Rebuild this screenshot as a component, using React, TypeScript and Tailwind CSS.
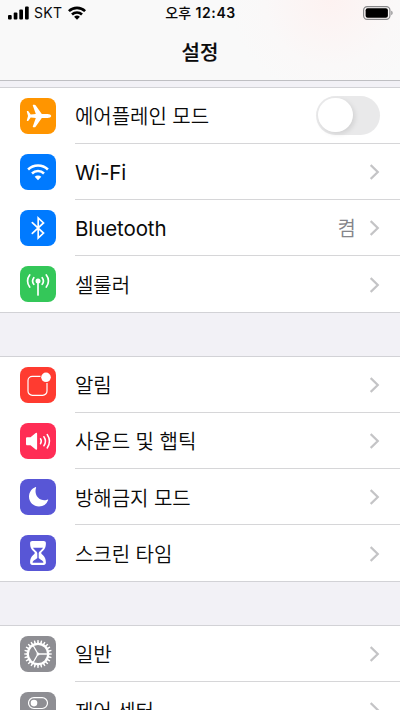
import type { ReactNode } from "react";

const krFont = "font-['Inter','Noto_Sans_CJK_KR',sans-serif]";

function Tile({ color, children }: { color: string; children: ReactNode }) {
  return (
    <div className={`size-9 shrink-0 overflow-hidden rounded-[8px] ${color}`}>
      <svg viewBox="0 0 36 36" className="block size-9" fill="none" stroke="white" strokeLinecap="round" strokeLinejoin="round">
        {children}
      </svg>
    </div>
  );
}

const Airplane = () => (
  <Tile color="bg-[#ff9500]">
    <path
      fill="white"
      stroke="none"
      d="M31.2 18c0-1.2-1.8-2-3.8-2h-5.6L15.600 7.300c-.3-.4-.6-.6-1.100-.6h-1.300c-.4 0-.5.3-.4.700L15.800 16l-5.100.4-2.300-3.100c-.2-.3-.4-.4-.7-.4h-.5c-.3 0-.4.200-.4.500L8 18l-1.200 4.600c0 .3.100.5.4.5h.5c.3 0 .5-.1.700-.4l2.300-3.100 5.100.4-3 8.600c-.1.4 0 .7.400.7h1.300c.5 0 .8-.2 1.100-.6L21.800 20h5.600c2 0 3.800-.8 3.800-2z"
    />
  </Tile>
);

const WifiTile = () => (
  <Tile color="bg-[#007aff]">
    <path d="M8.100 15.500a14 14 0 0 1 19.800 0M12 19.500a8.500 8.500 0 0 1 12 0" strokeWidth="2.500" strokeLinecap="butt" />
    <path fill="white" stroke="none" d="M18 26.300l-3.300-3.500a4.700 4.700 0 0 1 6.600 0z" />
  </Tile>
);

const BluetoothTile = () => (
  <Tile color="bg-[#007aff]">
    <path d="M12.300 12.700L23.500 23.100 18.200 28V8l5.300 4.900L12.300 23.300" strokeWidth="1.700" strokeLinejoin="miter" />
  </Tile>
);

const Cellular = () => (
  <Tile color="bg-[#34c759]">
    <circle cx="18" cy="15" r="2.500" fill="white" stroke="none" />
    <path d="M18 15v14" strokeWidth="1.700" />
    <path d="M13.800 11.700a5.500 5.500 0 0 0 0 6.600M22.200 11.700a5.500 5.500 0 0 1 0 6.600M9.700 9a9.500 9.500 0 0 0 0 12M26.300 9a9.500 9.500 0 0 1 0 12" strokeWidth="1.700" />
  </Tile>
);

const Notifications = () => (
  <Tile color="bg-[#ff3b30]">
    <path d="M20.500 9.300H12.300a4.300 4.300 0 0 0-4.300 4.300v10.400a4.300 4.300 0 0 0 4.300 4.300h10.400a4.300 4.300 0 0 0 4.300-4.300V16" strokeWidth="1.200" strokeLinecap="butt" />
    <circle cx="26" cy="10.300" r="4.800" fill="white" stroke="none" />
  </Tile>
);

const Sound = () => (
  <Tile color="bg-[#ff2d55]">
    <path fill="white" stroke="none" d="M7.300 14.300h3.200l5.200-4.200c.7-.6 1.400-.3 1.400.6v15.100c0 .9-.7 1.200-1.400.6l-5.200-4.200H7.300c-.8 0-1.300-.5-1.300-1.300v-5.300c0-.8.500-1.300 1.300-1.300z" />
    <path d="M20.500 15.800a4.300 4.300 0 0 1 0 4.900M23.900 13.700a8 8 0 0 1 0 9.100M27.200 11.500a12 12 0 0 1 0 13.500" strokeWidth="1.500" />
  </Tile>
);

const Moon = () => (
  <Tile color="bg-[#5856d6]">
    <path fill="white" stroke="none" d="M15.700 8.100c.3-.2.600.1.400.5-2 5.800 1.200 12.800 8.300 12.600 1.500 0 2.500-.4 3.300-.7.400-.2.700.1.500.5a10 10 0 0 1-9.200 6.500c-5.500 0-10-4.200-10-9.700 0-4.200 2.600-8.200 6.700-9.700z" />
  </Tile>
);

const Hourglass = () => (
  <Tile color="bg-[#5856d6]">
    <path fill="white" stroke="none" d="M12.300 6h11.400c1.400 0 2.200.9 2.200 2.300 0 5.100-2 6.700-4.200 8.700-.6.600-.6 1.500 0 2.100 2.200 2 4.200 3.600 4.200 8.500 0 1.500-.8 2.400-2.200 2.400H12.300c-1.400 0-2.200-.9-2.200-2.400 0-4.900 2-6.500 4.200-8.500.6-.6.600-1.500 0-2.100-2.200-2-4.200-3.600-4.200-8.700 0-1.400.8-2.300 2.200-2.300z" />
    <path fill="#5856d6" stroke="none" d="M13 12.700h10c-.7 1.500-2 2.300-3.200 3.500-1 1-1.100 1.500-1.100 2.500v4.100c0 1.200 3.500 2 4.700 4.300.2.400 0 .7-.4.700H13c-.4 0-.6-.3-.4-.7 1.200-2.300 4.700-3.100 4.700-4.300v-4.100c0-1-.1-1.500-1.100-2.500-1.200-1.200-2.500-2-3.200-3.500z" />
  </Tile>
);

const teeth = Array.from({ length: 24 }, (_, i) => i * 15);

const Gear = () => (
  <Tile color="bg-[#8e8e93]">
    <circle cx="18" cy="18" r="10.200" strokeWidth="2.200" />
    {teeth.map((a) => (
      <path key={a} d="M17 7.800l.4-3.700h1.200l.4 3.700z" fill="white" stroke="none" transform={`rotate(${a} 18 18)`} />
    ))}
    <path d="M18 18h10M18 18l-5-8.700M18 18l-5 8.700" strokeWidth="1.300" />
    <circle cx="18" cy="18" r="1.500" fill="white" stroke="none" />
  </Tile>
);

const Controls = () => (
  <Tile color="bg-[#8e8e93]">
    <rect x="8.500" y="5.700" width="19" height="10.800" rx="5.400" strokeWidth="1.200" />
    <circle cx="14" cy="11.100" r="3.300" fill="white" stroke="none" />
    <rect x="8" y="19.500" width="20" height="11.500" rx="5.750" fill="white" stroke="none" />
  </Tile>
);

const Chevron = () => (
  <svg viewBox="0 0 10 16" className="mt-px h-4 w-2.5 shrink-0" fill="none" stroke="#c4c4c6" strokeWidth="2.200">
    <path d="M.7 1.100L7.800 8 .7 14.900" />
  </svg>
);

const Toggle = () => (
  <div className="flex h-[39px] w-16 items-center rounded-full bg-[#e9e9ea] px-[2px]">
    <div className="size-[34.500px] rounded-full bg-white shadow-[2px_2px_5px_rgba(0,0,0,0.1)]" />
  </div>
);

type Item = { icon: ReactNode; label: string; latin?: boolean; value?: string; toggle?: boolean };

function Row({ item, last }: { item: Item; last: boolean }) {
  return (
    <div className="flex h-[56.250px] shrink-0 items-center pl-5">
      {item.icon}
      <div className={`ml-[19px] flex h-full flex-1 items-center pr-5 ${last ? "" : "border-b border-[#d6d6d8]"}`}>
        <span className={`flex-1 whitespace-nowrap leading-7 ${item.latin ? "pt-[3px] text-[20.500px] tracking-[-0.1px]" : "pt-[4px] text-[20px] font-[350] tracking-[-0.05px]"}`}>{item.label}</span>
        {item.value && <span className="mr-[14px] pt-[3px] text-[20px] font-[350] leading-7 text-[#85858a]">{item.value}</span>}
        {item.toggle ? <Toggle /> : <Chevron />}
      </div>
    </div>
  );
}

function Group({ items }: { items: Item[] }) {
  return (
    <div className="shrink-0 bg-white shadow-[0_-1px_0_#d2d2d6,inset_0_-1px_0_#d2d2d6]">
      {items.map((item, i) => (
        <Row key={item.label} item={item} last={i === items.length - 1} />
      ))}
    </div>
  );
}

const connectivity: Item[] = [
  { icon: <Airplane />, label: "에어플레인 모드", toggle: true },
  { icon: <WifiTile />, label: "Wi-Fi", latin: true },
  { icon: <BluetoothTile />, label: "Bluetooth", latin: true, value: "켬" },
  { icon: <Cellular />, label: "셀룰러" },
];
const alerts: Item[] = [
  { icon: <Notifications />, label: "알림" },
  { icon: <Sound />, label: "사운드 및 햅틱" },
  { icon: <Moon />, label: "방해금지 모드" },
  { icon: <Hourglass />, label: "스크린 타임" },
];
const general: Item[] = [
  { icon: <Gear />, label: "일반" },
  { icon: <Controls />, label: "제어 센터" },
];

function StatusBar() {
  return (
    <div className="grid h-[25px] grid-cols-3 items-center pl-2 pr-[7px]">
      <div className="flex items-center">
        <svg viewBox="0 0 22 14" className="h-3.5 w-[22px]" fill="black">
          <rect x="0" y="9" width="3.700" height="4.500" rx="1" />
          <rect x="5.700" y="6.500" width="3.700" height="7" rx="1" />
          <rect x="11.300" y="3.500" width="3.700" height="10" rx="1" />
          <rect x="17" y="0.500" width="3.700" height="13" rx="1" />
        </svg>
        <span className="ml-1 text-[14px] leading-5 tracking-[0.300px]">SKT</span>
        <svg viewBox="0 0 18 14" className="ml-[6px] h-3.5 w-[18px]" fill="none" stroke="black" strokeWidth="2.600">
          <path d="M.9 5.100a11.700 11.700 0 0 1 16.200 0M4 8.500a7.200 7.200 0 0 1 10 0" />
          <path d="M9 13.800l-2.900-3a4.200 4.200 0 0 1 5.800 0z" fill="black" stroke="none" />
        </svg>
      </div>
      <div className="whitespace-nowrap text-center text-[14px] font-semibold leading-5 tracking-[0.600px]">
        <span className="font-medium tracking-[0.200px]">오후</span> 12:43
      </div>
      <svg viewBox="0 0 30 14" className="h-3.5 w-[30px] justify-self-end">
        <rect x="0.600" y="0.600" width="26.300" height="12.800" rx="3.600" fill="none" stroke="#88888a" strokeWidth="1.200" />
        <rect x="2.600" y="2.300" width="22.300" height="9.400" rx="2" fill="black" />
        <path d="M28.300 4.800c1.700.4 1.700 4 0 4.400z" fill="#88888a" />
      </svg>
    </div>
  );
}

export default function App() {
  return (
    <div className={`flex h-[710px] w-[400px] flex-col overflow-hidden bg-[#f2f1f6] text-[#0a0a0a] ${krFont}`}>
      <header className="h-[81px] shrink-0 border-b border-[#bfbfc3] bg-[#f9f9f9] bg-[radial-gradient(circle_at_330px_0px,#fdf2f1_0px,#faf8f8_65px,transparent_100px)]">
        <StatusBar />
        <h1 className="mt-[14px] text-center text-[20px] font-medium leading-7 [-webkit-text-stroke:0.2px_#0a0a0a]">설정</h1>
      </header>
      <main className="flex min-h-0 flex-1 flex-col gap-[44px] overflow-hidden pt-[6.500px]">
        <Group items={connectivity} />
        <Group items={alerts} />
        <Group items={general} />
      </main>
    </div>
  );
}
